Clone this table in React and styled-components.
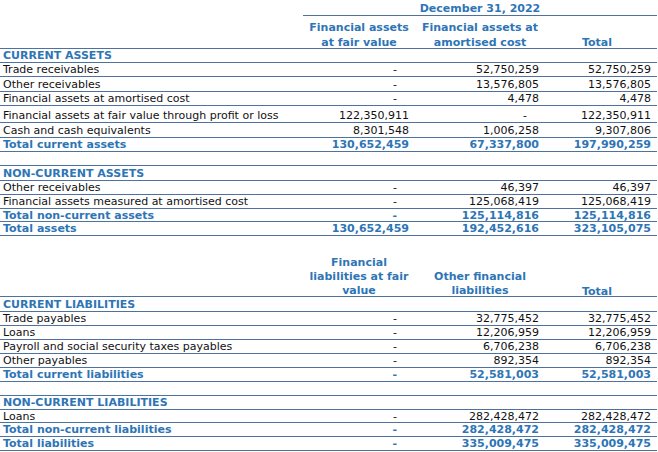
import React from "react";
import styled, { createGlobalStyle } from "styled-components";

const COLS = "303px 112px 130px 112px";
const BLUE = "#2e75b6";
const LINE = "#4f71a0";

const GlobalStyle = createGlobalStyle`
	html, body {
		margin: 0;
		padding: 0;
		background: #fff;
	}
	body {
		font-family: "DejaVu Sans", Verdana, sans-serif;
		font-size: 11px;
		color: #111;
	}
`;

const Sheet = styled.section`
	width: 657px;
`;

const Row = styled.div`
	display: grid;
	grid-template-columns: ${COLS};
	align-items: end;
	box-sizing: border-box;
	height: ${(p) => p.$h || 14}px;
	line-height: 13px;
	border-bottom: ${(p) => (p.$noLine ? "none" : `1px solid ${LINE}`)};
	color: ${(p) => (p.$kind === "item" ? "#111" : BLUE)};
	font-weight: ${(p) => (p.$kind === "item" ? 400 : 700)};
	white-space: nowrap;
`;

const DateRow = styled.div`
	display: grid;
	grid-template-columns: 303px 1fr;
	height: 16px;
	align-items: end;
	line-height: 13px;

	h1 {
		margin: 0;
		grid-column: 2;
		font-size: 11px;
		font-weight: 700;
		color: ${BLUE};
		height: 15px;
		box-sizing: border-box;
		border-bottom: 1px solid ${LINE};
		display: flex;
		align-items: flex-end;
		justify-content: center;
	}
`;

const HeadRow = styled.div`
	display: grid;
	grid-template-columns: ${COLS};
	align-items: end;
	box-sizing: border-box;
	height: ${(p) => p.$h}px;
	border-bottom: 1px solid ${LINE};
	color: ${BLUE};
	font-weight: 700;
	line-height: ${(p) => p.$lh}px;
`;

const HeadCell = styled.div`
	text-align: center;
	white-space: nowrap;
	margin-bottom: ${(p) => p.$mb || 0}px;
	padding-right: ${(p) => p.$pr || 0}px;
`;

const Label = styled.div`
	padding-left: 3px;
`;

const Num = styled.div`
	text-align: right;
	padding-right: 6px;
`;

const Dash = styled.span`
	padding-right: 12px;
`;

const assets = [
	{ kind: "section", label: "CURRENT ASSETS" },
	{ kind: "item", label: "Trade receivables", v: ["-", "52,750,259", "52,750,259"] },
	{ kind: "item", label: "Other receivables", v: ["-", "13,576,805", "13,576,805"], h: 15 },
	{ kind: "item", label: "Financial assets at amortised cost", v: ["-", "4,478", "4,478"] },
	{ kind: "item", label: "Financial assets at fair value through profit or loss", v: ["122,350,911", "-", "122,350,911"], h: 17 },
	{ kind: "item", label: "Cash and cash equivalents", v: ["8,301,548", "1,006,258", "9,307,806"], h: 15 },
	{ kind: "total", label: "Total current assets", v: ["130,652,459", "67,337,800", "197,990,259"] },
	{ kind: "blank" },
	{ kind: "section", label: "NON-CURRENT ASSETS", h: 15 },
	{ kind: "item", label: "Other receivables", v: ["-", "46,397", "46,397"] },
	{ kind: "item", label: "Financial assets measured at amortised cost", v: ["-", "125,068,419", "125,068,419"] },
	{ kind: "total", label: "Total non-current assets", v: ["-", "125,114,816", "125,114,816"], h: 13 },
	{ kind: "total", label: "Total assets", v: ["130,652,459", "192,452,616", "323,105,075"] },
];

const liabilities = [
	{ kind: "section", label: "CURRENT LIABILITIES", h: 15 },
	{ kind: "item", label: "Trade payables", v: ["-", "32,775,452", "32,775,452"] },
	{ kind: "item", label: "Loans", v: ["-", "12,206,959", "12,206,959"] },
	{ kind: "item", label: "Payroll and social security taxes payables", v: ["-", "6,706,238", "6,706,238"] },
	{ kind: "item", label: "Other payables", v: ["-", "892,354", "892,354"] },
	{ kind: "total", label: "Total current liabilities", v: ["-", "52,581,003", "52,581,003"] },
	{ kind: "blank" },
	{ kind: "section", label: "NON-CURRENT LIABILITIES" },
	{ kind: "item", label: "Loans", v: ["-", "282,428,472", "282,428,472"], h: 13 },
	{ kind: "total", label: "Total non-current liabilities", v: ["-", "282,428,472", "282,428,472"] },
	{ kind: "total", label: "Total liabilities", v: ["-", "335,009,475", "335,009,475"] },
];

const Line = ({ row }) => (
	<Row $kind={row.kind} $h={row.h}>
		<Label>{row.label}</Label>
		{(row.v || ["", "", ""]).map((val, i) => (
			<Num key={i}>{val === "-" ? <Dash>-</Dash> : val}</Num>
		))}
	</Row>
);

const App = () => {
	return (
		<>
			<GlobalStyle />
			<Sheet>
				<DateRow>
					<h1>December 31, 2022</h1>
				</DateRow>
				<HeadRow $h={33} $lh={15}>
					<div />
					<HeadCell $mb={-2}>
						Financial assets
						<br />
						at fair value
					</HeadCell>
					<HeadCell $mb={-2}>
						Financial assets at
						<br />
						amortised cost
					</HeadCell>
					<HeadCell $mb={-2} $pr={8}>
						Total
					</HeadCell>
				</HeadRow>
				{assets.map((row, i) => (
					<Line key={i} row={row} />
				))}

				<HeadRow $h={61} $lh={14}>
					<div />
					<HeadCell $mb={-2}>
						Financial
						<br />
						liabilities at fair
						<br />
						value
					</HeadCell>
					<HeadCell $mb={-2}>
						Other financial
						<br />
						liabilities
					</HeadCell>
					<HeadCell $mb={-3} $pr={8}>
						Total
					</HeadCell>
				</HeadRow>
				{liabilities.map((row, i) => (
					<Line key={i} row={row} />
				))}
			</Sheet>
		</>
	);
};

export default App;
